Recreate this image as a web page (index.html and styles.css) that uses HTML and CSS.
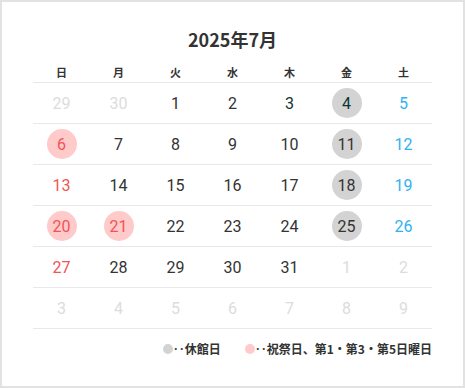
FILE: index.html
```html
<!DOCTYPE html>
<html lang="ja">
<head>
<meta charset="utf-8">
<link rel="stylesheet" href="styles.css">
</head>
<body>
<div class="cal">
  <h1 class="title">2025年7月</h1>
  <div class="grid head">
    <div>日</div><div>月</div><div>火</div><div>水</div><div>木</div><div>金</div><div>土</div>
  </div>
  <div class="grid row">
    <div class="c"><span class="d other">29</span></div>
    <div class="c"><span class="d other">30</span></div>
    <div class="c"><span class="d">1</span></div>
    <div class="c"><span class="d">2</span></div>
    <div class="c"><span class="d teal">3</span></div>
    <div class="c"><span class="d teal closed">4</span></div>
    <div class="c"><span class="d sat">5</span></div>
  </div>
  <div class="grid row">
    <div class="c"><span class="d sun hol">6</span></div>
    <div class="c"><span class="d">7</span></div>
    <div class="c"><span class="d">8</span></div>
    <div class="c"><span class="d">9</span></div>
    <div class="c"><span class="d">10</span></div>
    <div class="c"><span class="d closed">11</span></div>
    <div class="c"><span class="d sat">12</span></div>
  </div>
  <div class="grid row">
    <div class="c"><span class="d sun">13</span></div>
    <div class="c"><span class="d">14</span></div>
    <div class="c"><span class="d">15</span></div>
    <div class="c"><span class="d">16</span></div>
    <div class="c"><span class="d">17</span></div>
    <div class="c"><span class="d closed">18</span></div>
    <div class="c"><span class="d sat">19</span></div>
  </div>
  <div class="grid row">
    <div class="c"><span class="d sun hol">20</span></div>
    <div class="c"><span class="d sun hol">21</span></div>
    <div class="c"><span class="d">22</span></div>
    <div class="c"><span class="d">23</span></div>
    <div class="c"><span class="d">24</span></div>
    <div class="c"><span class="d closed">25</span></div>
    <div class="c"><span class="d sat">26</span></div>
  </div>
  <div class="grid row">
    <div class="c"><span class="d sun">27</span></div>
    <div class="c"><span class="d">28</span></div>
    <div class="c"><span class="d">29</span></div>
    <div class="c"><span class="d">30</span></div>
    <div class="c"><span class="d">31</span></div>
    <div class="c"><span class="d other">1</span></div>
    <div class="c"><span class="d other">2</span></div>
  </div>
  <div class="grid row">
    <div class="c"><span class="d other">3</span></div>
    <div class="c"><span class="d other">4</span></div>
    <div class="c"><span class="d other">5</span></div>
    <div class="c"><span class="d other">6</span></div>
    <div class="c"><span class="d other">7</span></div>
    <div class="c"><span class="d other">8</span></div>
    <div class="c"><span class="d other">9</span></div>
  </div>
  <div class="legend">
    <span class="item"><span class="dot gray"></span>‥休館日</span>
    <span class="item"><span class="dot pink"></span>‥祝祭日、第1・第3・第5日曜日</span>
  </div>
</div>
</body>
</html>
```

FILE: styles.css
```css
html, body {
  margin: 0;
  padding: 0;
  background: #fff;
}
.cal {
  box-sizing: border-box;
  width: 465px;
  height: 388px;
  border: 2px solid #e2e2e2;
  padding: 25px 31px 0;
  font-family: "Noto Sans CJK JP", "Noto Sans", sans-serif;
  color: #333;
}
.title {
  margin: 0;
  text-align: center;
  font-size: 18px;
  line-height: 24px;
  font-weight: 700;
  color: #333;
}
.grid {
  display: grid;
  grid-template-columns: repeat(7, 1fr);
  border-bottom: 1px solid #e8e8e8;
}
.head {
  margin-top: 11px;
  height: 20px;
  font-size: 11px;
  line-height: 20px;
  font-weight: 700;
  text-align: center;
  color: #333;
  box-sizing: border-box;
  height: 21px;
  padding-bottom: 1px;
  align-items: start;
}
.row {
  height: 41px;
  box-sizing: border-box;
}
.c {
  display: flex;
  align-items: center;
  justify-content: center;
}
.d {
  width: 30px;
  height: 30px;
  border-radius: 50%;
  display: flex;
  align-items: center;
  justify-content: center;
  font-family: Roboto, "Noto Sans", sans-serif;
  font-size: 16px;
  color: #333;
}
.other { color: #dcdcdc; }
.sun { color: #f25454; }
.sat { color: #2fb2f2; }
.teal { color: #0b3636; }
.closed { background: #d3d3d3; }
.hol { background: #ffcaca; }
.legend {
  display: flex;
  justify-content: flex-end;
  gap: 24px;
  margin-top: 12px;
  font-size: 12px;
  line-height: 16px;
  font-weight: 700;
  color: #333;
}
.item {
  display: flex;
  align-items: center;
}
.dot {
  width: 10px;
  height: 10px;
  border-radius: 50%;
  margin-right: 0;
}
.gray { background: #d3d3d3; }
.pink { background: #ffcaca; }
```
